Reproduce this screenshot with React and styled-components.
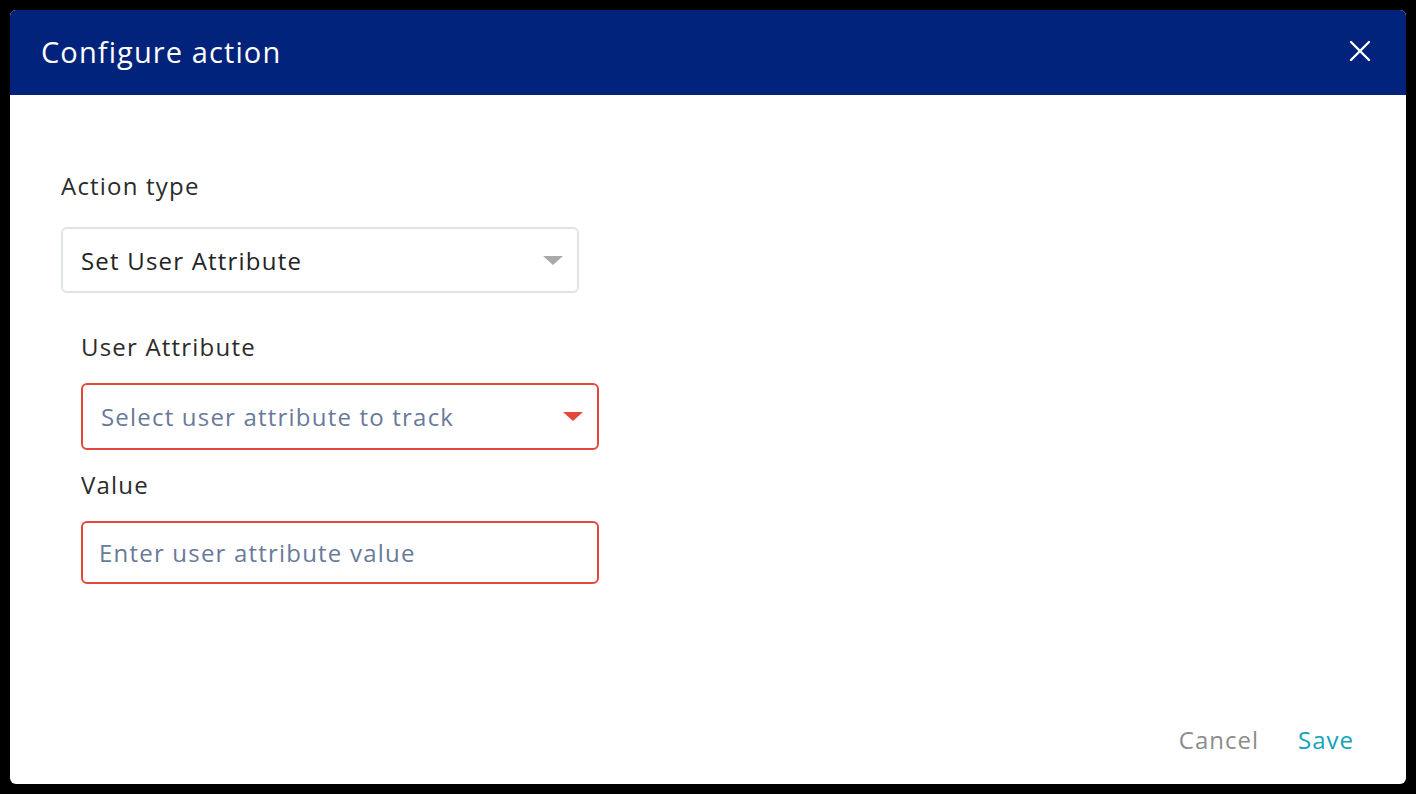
import React from "react";
import styled, { createGlobalStyle } from "styled-components";

const GlobalStyle = createGlobalStyle`
  html, body {
    margin: 0;
    padding: 0;
    background: #000;
  }
  body {
    font-family: "Open Sans", "Liberation Sans", sans-serif;
  }
`;

const Backdrop = styled.div`
  width: 1416px;
  height: 794px;
  padding: 10px;
  box-sizing: border-box;
  background: #000;
`;

const Dialog = styled.div`
  width: 100%;
  height: 100%;
  background: #fff;
  border-radius: 6px;
  overflow: hidden;
  display: flex;
  flex-direction: column;
`;

const Header = styled.div`
  height: 85px;
  box-sizing: border-box;
  flex-shrink: 0;
  background: #01237b;
  display: flex;
  align-items: center;
  justify-content: space-between;
  padding: 0 34px 3px 31px;
`;

const Title = styled.h2`
  margin: 0;
  color: #fff;
  font-size: 29px;
  font-weight: 400;
  letter-spacing: 1.1px;
`;

const CloseButton = styled.button`
  border: none;
  background: none;
  padding: 0;
  width: 24px;
  height: 24px;
  display: flex;
  align-items: center;
  justify-content: center;
  cursor: pointer;
`;

const Body = styled.div`
  flex: 1;
  padding: 75px 51px 0;
  display: flex;
  flex-direction: column;
`;

const Label = styled.div`
  font-size: 24px;
  color: #2b2b2b;
  line-height: 32px;
  letter-spacing: 1.2px;
  margin-bottom: ${(p) => p.gap || 26}px;
`;

const Select = styled.div`
  box-sizing: border-box;
  width: 518px;
  height: ${(p) => p.height || 66}px;
  border: 2px solid ${(p) => (p.error ? "#e5473b" : "#dfe3ec")};
  border-radius: 6px;
  display: flex;
  align-items: center;
  justify-content: space-between;
  padding: 0 14px 0 ${(p) => p.padLeft || 18}px;
  font-size: 24px;
  letter-spacing: 1.2px;
  color: ${(p) => (p.placeholder ? "#6a7a99" : "#222")};
`;

const Caret = styled.span`
  width: 0;
  height: 0;
  border-left: 10px solid transparent;
  border-right: 10px solid transparent;
  border-top: 9px solid ${(p) => p.color};
`;

const SubFields = styled.div`
  padding-left: 20px;
  margin-top: 38px;
  display: flex;
  flex-direction: column;
`;

const Spacer = styled.div`
  height: ${(p) => p.h}px;
`;

const Footer = styled.div`
  display: flex;
  justify-content: flex-end;
  align-items: center;
  gap: 39px;
  padding: 0 52px 28px 0;
`;

const TextButton = styled.button`
  border: none;
  background: none;
  padding: 0;
  font-family: inherit;
  font-size: 24px;
  letter-spacing: 1px;
  color: ${(p) => (p.primary ? "#13a3b9" : "#8c8c8c")};
  cursor: pointer;
`;

export default function App() {
  return (
    <>
      <GlobalStyle />
      <Backdrop>
        <Dialog>
          <Header>
            <Title>Configure action</Title>
            <CloseButton aria-label="Close">
              <svg width="22" height="22" viewBox="0 0 22 22">
                <path d="M2 2L20 20M20 2L2 20" stroke="#fff" strokeWidth="2.4" strokeLinecap="round" />
              </svg>
            </CloseButton>
          </Header>
          <Body>
            <Label gap={25}>Action type</Label>
            <Select height={66}>
              <span>Set User Attribute</span>
              <Caret color="#a9a9a9" />
            </Select>
            <SubFields>
              <Label gap={20}>User Attribute</Label>
              <Select error placeholder height={67}>
                <span>Select user attribute to track</span>
                <Caret color="#e5473b" />
              </Select>
              <Spacer h={19} />
              <Label gap={20}>Value</Label>
              <Select error placeholder height={63} padLeft={16}>
                <span>Enter user attribute value</span>
              </Select>
            </SubFields>
          </Body>
          <Footer>
            <TextButton>Cancel</TextButton>
            <TextButton primary>Save</TextButton>
          </Footer>
        </Dialog>
      </Backdrop>
    </>
  );
}
